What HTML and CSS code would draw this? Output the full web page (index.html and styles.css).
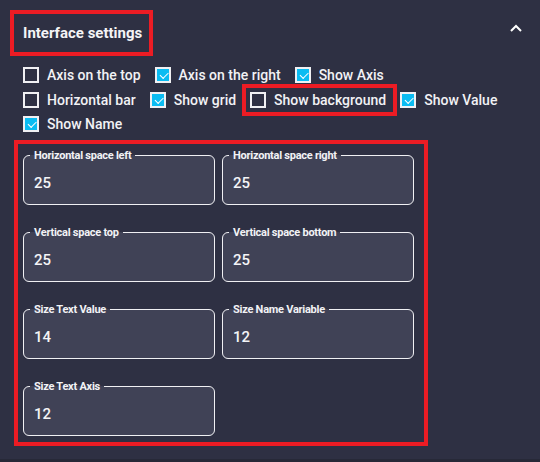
FILE: index.html
```html
<!doctype html>
<html lang="en">
<head>
	<meta charset="UTF-8">
	<title>Interface settings</title>
	<link rel="stylesheet" href="styles.css">
</head>
<body>
	<div class="panel">
		<div class="head">
			<h2 class="title">Interface settings</h2>
			<svg class="chevron" width="12" height="8" viewBox="0 0 12 8">
				<polyline points="1,7 6,2 11,7" fill="none" stroke="#fff" stroke-width="2"/>
			</svg>
		</div>

		<div class="options">
			<div class="row">
				<label class="opt"><input type="checkbox">Axis on the top</label>
				<label class="opt"><input type="checkbox" checked>Axis on the right</label>
				<label class="opt"><input type="checkbox" checked>Show Axis</label>
			</div>
			<div class="row">
				<label class="opt"><input type="checkbox">Horizontal bar</label>
				<label class="opt"><input type="checkbox" checked>Show grid</label>
				<label class="opt mark"><input type="checkbox">Show background</label>
				<label class="opt"><input type="checkbox" checked>Show Value</label>
			</div>
			<div class="row">
				<label class="opt"><input type="checkbox" checked>Show Name</label>
			</div>
		</div>

		<div class="fields">
			<fieldset class="field"><legend>Horizontal space left</legend><div class="val">25</div></fieldset>
			<fieldset class="field"><legend>Horizontal space right</legend><div class="val">25</div></fieldset>
			<fieldset class="field"><legend>Vertical space top</legend><div class="val">25</div></fieldset>
			<fieldset class="field"><legend>Vertical space bottom</legend><div class="val">25</div></fieldset>
			<fieldset class="field"><legend>Size Text Value</legend><div class="val">14</div></fieldset>
			<fieldset class="field"><legend>Size Name Variable</legend><div class="val">12</div></fieldset>
			<fieldset class="field"><legend>Size Text Axis</legend><div class="val">12</div></fieldset>
		</div>
	</div>
</body>
</html>
```

FILE: styles.css
```css
/*reset*/
*{padding:0;margin:0;box-sizing:border-box;}

html,body{width:100%;height:100%;}
body{
	background:#272938;
	font-family:Roboto,"Liberation Sans",sans-serif;
	color:#f2f2f5;
}
.panel{
	height:459px;
	background:#2e3043;
	padding:10px 0 0 10px;
}

/*header*/
.head{display:flex;}
.title{
	height:46px;line-height:38px;
	padding:0 7px 0 9px;
	border:4px solid #ec1c24;
	font-size:15px;font-weight:700;
	color:#f4f4f6;
}
.chevron{
	display:block;
	margin:14px 18px 0 auto;
}

/*checkbox rows*/
.options{
	padding:11px 0 0 13px;
	display:flex;flex-direction:column;gap:8.5px;
}
.row{display:flex;gap:14px;}
.opt{
	display:flex;align-items:center;
	height:16px;line-height:16px;
	font-size:14px;font-weight:500;
	white-space:nowrap;
}
.opt.mark{
	outline:4px solid #ec1c24;
	outline-offset:4px;
	padding-right:3px;
	margin-right:-3px;
}
.opt input{
	appearance:none;
	width:16px;height:16px;
	margin-right:8px;
	border:2px solid #f0f0f3;
	background:#2e3043;
	position:relative;
	flex:none;
}
.opt input:checked{background:#0bbcf2;}
.opt input:checked:before{
	content:'';
	position:absolute;left:3px;top:3px;
	width:7px;height:3.5px;
	border-left:1.5px solid #fff;border-bottom:1.5px solid #fff;
	transform:rotate(-45deg);
}

/*number fields*/
.fields{
	width:414px;
	margin:8px 0 0 4px;
	padding:5px 10px 6px 5px;
	border:4px solid #ec1c24;
	display:grid;
	grid-template-columns:192px 192px;
	column-gap:7px;row-gap:21px;
}
.field{
	height:56px;
	border:1px solid #f0f0f3;
	border-radius:6px;
	background:#404256;
	padding:11px 10px 0;
}
.field legend{
	margin-left:-4px;padding:0 4px;
	font-size:11px;font-weight:700;line-height:13px;
	letter-spacing:-0.25px;
	color:#f2f2f5;
}
.val{
	font-size:15px;font-weight:500;
	line-height:20px;
	color:#f4f4f6;
}
```
